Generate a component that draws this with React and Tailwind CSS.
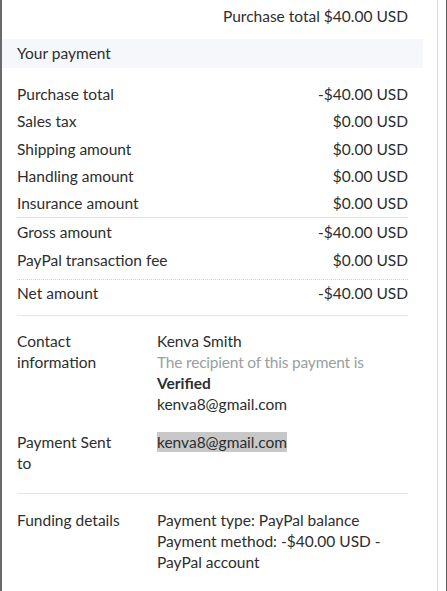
import React from 'react';

const rows1 = [
  ['Purchase total', '-$40.00 USD'],
  ['Sales tax', '$0.00 USD'],
  ['Shipping amount', '$0.00 USD'],
  ['Handling amount', '$0.00 USD'],
  ['Insurance amount', '$0.00 USD'],
];

const Row = ({ label, value }) => (
  <div className="flex justify-between h-[27.25px] items-center">
    <span>{label}</span>
    <span>{value}</span>
  </div>
);

const App = () => {
  return (
    <div
      className="w-[447px] h-[591px] overflow-hidden flex bg-white text-[#2c2e2f] text-[15.5px] leading-[21px]"
      style={{ fontFamily: 'Lato, "Open Sans", sans-serif' }}
    >
      <div className="w-[2px] bg-[#6a6a6a] shrink-0" />
      <div className="w-[435px] shrink-0 flex flex-col">
        <div className="pt-[6px] pr-[29px] text-right">Purchase total $40.00 USD</div>

        <div className="mt-[12px] mr-[14px] bg-[#f5f7fa] h-[29px] flex items-center pl-[15px]">
          Your payment
        </div>

        <div className="pl-[15px] pr-[29px] pt-[13px]">
          {rows1.map(([l, v]) => (
            <Row key={l} label={l} value={v} />
          ))}
          <div className="border-t border-[#e3e3e3]" />
          <div className="pt-[1px]">
            <Row label="Gross amount" value="-$40.00 USD" />
            <Row label="PayPal transaction fee" value="$0.00 USD" />
          </div>
          <div className="border-t border-dotted border-[#cfcfcf] mt-[5px]" />
          <Row label="Net amount" value="-$40.00 USD" />
          <div className="border-t border-[#e5e5e5] mt-[8px]" />

          <div className="flex pt-[15px]">
            <div className="w-[140px] shrink-0">
              Contact
              <br />
              information
            </div>
            <div>
              <div>Kenva Smith</div>
              <div className="text-[#9a9ea1] tracking-[-0.2px]">The recipient of this payment is</div>
              <div className="font-bold">Verified</div>
              <div>kenva8@gmail.com</div>
            </div>
          </div>

          <div className="flex pt-[17px]">
            <div className="w-[140px] shrink-0">
              Payment Sent
              <br />
              to
            </div>
            <div>
              <span className="bg-[#c8c8c8] py-[1px]">kenva8@gmail.com</span>
            </div>
          </div>

          <div className="border-t border-[#e5e5e5] mt-[19px]" />

          <div className="flex pt-[16px]">
            <div className="w-[140px] shrink-0">Funding details</div>
            <div>
              <div>Payment type: PayPal balance</div>
              <div>Payment method: -$40.00 USD -</div>
              <div>PayPal account</div>
            </div>
          </div>
        </div>
      </div>
      <div className="w-[9px] shrink-0 border-l border-[#dcdcdc] bg-white" />
      <div className="w-[1px] shrink-0 bg-[#5a5a5a]" />
    </div>
  );
};

export default App;
